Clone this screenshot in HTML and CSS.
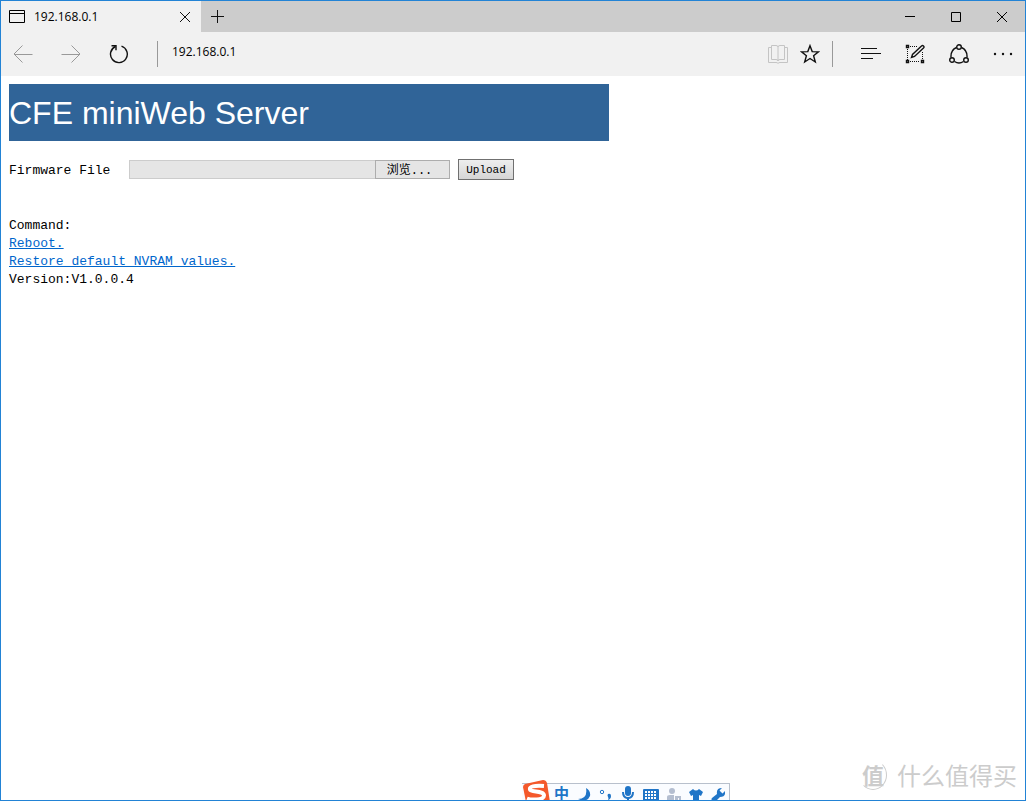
FILE: index.html
```
<!DOCTYPE html>
<html lang="en">
<head>
<meta charset="utf-8">
<title>192.168.0.1</title>
<link rel="stylesheet" href="styles.css">
</head>
<body>
<div class="window">
  <header class="titlebar">
    <div class="tab">
      <svg class="tab-icon" width="16" height="14" viewBox="0 0 16 14"><path d="M.5 .5h15v12H.5zM.5 3.5h15"/></svg>
      <span class="tab-title">192.168.0.1</span>
      <button class="icon-button tab-close" aria-label="Close tab"><svg width="12" height="12" viewBox="0 0 12 12"><path d="M1 1l10 10M11 1L1 11"/></svg></button>
    </div>
    <button class="icon-button new-tab" aria-label="New tab"><svg width="13" height="13" viewBox="0 0 13 13"><path d="M6.5 0v13M0 6.5h13"/></svg></button>
    <div class="window-controls">
      <button class="icon-button control" aria-label="Minimize"><svg width="10" height="10" viewBox="0 0 10 10"><path d="M0 4.5h10"/></svg></button>
      <button class="icon-button control" aria-label="Maximize"><svg width="10" height="10" viewBox="0 0 10 10"><path d="M.5 .5h9v9h-9z"/></svg></button>
      <button class="icon-button control" aria-label="Close"><svg width="10" height="10" viewBox="0 0 10 10"><path d="M0 0l10 10M10 0L0 10"/></svg></button>
    </div>
  </header>
  <nav class="toolbar">
    <div class="history">
      <button class="icon-button dim" aria-label="Back"><svg width="20" height="18" viewBox="0 0 20 18"><path d="M9.5 .5L1 9l8.500 8.500M1 9.500h18.500"/></svg></button>
      <button class="icon-button dim" aria-label="Forward"><svg width="20" height="18" viewBox="0 0 20 18"><path d="M10.500 .5L19 9l-8.500 8.500M19 9.500H.5"/></svg></button>
      <button class="icon-button refresh" aria-label="Refresh"><svg width="20" height="20" viewBox="0 0 20 20"><path d="M12.500 2.200A8.400 8.400 0 1 1 6.500 2.500"/><path d="M2.500 1.700h4.500v4.500"/></svg></button>
    </div>
    <input class="address" type="text" value="192.168.0.1" aria-label="Address">
    <div class="page-tools">
      <button class="icon-button pale" aria-label="Reading view"><svg width="20" height="20" viewBox="0 0 20 20"><path d="M3.500 1.500H8q2 0 2 1.500 0-1.500 2-1.500h4.500v14H12q-2 0-2 1.500 0-1.500-2-1.500H3.500zM10 3v14M3.500 3.500h-3v15H8q2 0 2 1 0-1 2-1h7.500v-15h-3"/></svg></button>
      <button class="icon-button star" aria-label="Favorites"><svg width="20" height="20" viewBox="0 0 20 20"><path d="M10 1.700l2.200 5.900 6.300.3-4.900 3.900 1.700 6.200-5.300-3.500L4.700 18l1.700-6.200-4.900-3.900 6.300-.3z"/></svg></button>
    </div>
    <div class="menu-tools">
      <button class="icon-button lines" aria-label="Hub"><svg width="20" height="14" viewBox="0 0 20 14"><path d="M0 1.500h16M0 6.500h20M0 11.500h12"/></svg></button>
      <button class="icon-button note" aria-label="Web note"><svg width="20" height="20" viewBox="0 0 20 20"><path stroke-width="1" stroke-dasharray="1 1" d="M5 2.500h8M2.500 5v11M5 17.500h10M17.500 8v8"/><path d="M1.500 1.500h2v2h-2zM1.500 16.500h2v2h-2zM16.500 16.500h2v2h-2zM6.500 13.500l1-3 9-8.500q1-1 2 0t0 2L9.500 12.500z"/></svg></button>
      <button class="icon-button share" aria-label="Share"><svg width="20" height="20" viewBox="0 0 20 20"><path d="M7.500 3.500Q1.500 6 2 13.500M12.500 3.500Q18.500 6 18 13.500M5.500 17.500q4.500 3 9 0"/><circle cx="10" cy="3" r="2.300"/><circle cx="3" cy="16" r="2.300"/><circle cx="17" cy="16" r="2.300"/></svg></button>
      <button class="icon-button" aria-label="More"><svg class="solid" width="20" height="4" viewBox="0 0 20 4"><circle cx="2" cy="2" r="1.200"/><circle cx="10" cy="2" r="1.200"/><circle cx="18" cy="2" r="1.200"/></svg></button>
    </div>
  </nav>
  <main class="page">
    <h1 class="banner">CFE miniWeb Server</h1>
    <form class="upload">
      <label class="file-label" for="firmware">Firmware File</label>
      <input class="file-name" id="firmware" type="text" readonly>
      <button class="browse" type="button">浏览...</button>
      <button class="submit" type="button">Upload</button>
    </form>
    <section class="commands">
      <div>Command:</div>
      <div><a href="#reboot">Reboot.</a></div>
      <div><a href="#restore">Restore default NVRAM values.</a></div>
      <div>Version:V1.0.0.4</div>
    </section>
  </main>
  <div class="watermark">
    <span class="watermark-seal">值</span>
    <span>什么值得买</span>
  </div>
  <div class="ime">
    <svg class="ime-logo" width="28" height="22" viewBox="0 0 28 22"><path fill="#f4592b" d="M3 4L21 0q3 0 4 3l3 19H4L1 7q0-2 2-3z"/><path fill="none" stroke="#fff" stroke-width="4" d="M22 6Q7 5 8 9.500c1 3 14 1 14 6S9 20 5 18.500"/></svg>
    <span class="ime-mode">中</span>
    <svg width="14" height="14" viewBox="0 0 14 14"><path d="M9 0q5 3 4 8-3 7-12 3 10 0 8-11z"/></svg>
    <svg width="14" height="14" viewBox="0 0 14 14"><circle class="ring" cx="3" cy="4" r="1.700"/><path d="M9 6q3-1 3 2 0 3-3 4 1-2 0-3-1-2 0-3z"/></svg>
    <svg width="14" height="16" viewBox="0 0 14 16"><rect x="4" y="0" width="6" height="10" rx="3"/><path d="M1 6h2q0 5 4 5t4-5h2q0 6-5 7v2h3v1H3v-1h3v-2Q1 12 1 6z"/></svg>
    <svg width="16" height="14" viewBox="0 0 16 14"><rect y="1" width="16" height="12" rx="1"/><path class="keys" d="M2 4h12M2 7h12M2 10h12"/></svg>
    <svg class="muted" width="14" height="14" viewBox="0 0 14 14"><circle cx="5" cy="3" r="3"/><path d="M0 14V9q0-2 3-2h4v7zM8 8h6v6h-2v-4h-1v4H8z"/></svg>
    <svg width="14" height="14" viewBox="0 0 14 14"><path d="M4 1q3 3 6 0l4 3-2 4-2-1v7H4V7L2 8 0 4z"/></svg>
    <svg width="14" height="14" viewBox="0 0 14 14"><path d="M11 0L8.500 2.500l3 3L14 3q1 6-5 6l-5 5q-2 1-3-1t0-3l5-4q-1-6 5-6z"/></svg>
  </div>
</div>
</body>
</html>
```
FILE: styles.css
```
* { box-sizing: border-box; }

body {
  margin: 0;
  background: #fff;
  color: #000;
  font-family: "Liberation Mono", "Noto Sans CJK SC", monospace;
  font-size: 13px;
}

.window {
  position: relative;
  display: flex;
  flex-direction: column;
  min-height: 100vh;
  border: 1px solid #2283d5;
  overflow: hidden;
}

svg { display: block; flex: none; }

.icon-button {
  display: flex;
  align-items: center;
  justify-content: center;
  padding: 0;
  border: 0;
  background: none;
}

.icon-button svg, .tab-icon {
  fill: none;
  stroke: #111;
}

.tab-icon, .control svg { stroke: #000; }
.icon-button .solid { fill: #111; stroke: none; }
.dim svg { stroke: #999; }
.pale svg { stroke: #c4c4c4; }
.star svg, .note svg, .refresh svg, .share svg { stroke-width: 1.4; }

.titlebar {
  display: flex;
  height: 31px;
  background: #ccc;
}

.tab {
  display: flex;
  align-items: center;
  width: 200px;
  padding: 0 10px 0 8px;
  background: #f1f1f1;
}

.tab-title, .address {
  font-family: "Open Sans", sans-serif;
  font-size: 12px;
}

.tab-title { flex: 1; margin-left: 9px; }
.new-tab { width: 33px; }
.window-controls { display: flex; margin-left: auto; }
.control { width: 46px; }

.toolbar {
  display: flex;
  align-items: center;
  height: 44px;
  padding: 0 12px;
  background: #f1f1f1;
}

.history { display: flex; gap: 28px; }

.address {
  flex: 1;
  height: 26px;
  min-width: 0;
  margin-left: 28px;
  padding: 0 14px 6px;
  border: 0;
  border-left: 1px solid #999;
  background: none;
  color: #000;
}

.page-tools {
  display: flex;
  align-items: center;
  gap: 12px;
  height: 26px;
  padding-right: 12px;
  border-right: 1px solid #999;
}

.menu-tools {
  display: flex;
  gap: 24px;
  margin-left: 28px;
}

.page { flex: 1; padding: 8px; }

.banner {
  max-width: 600px;
  margin: 0;
  padding-top: 1px;
  background: #306498;
  color: #fff;
  font: 32px/56px "Liberation Sans", Arial, sans-serif;
}

.upload {
  display: flex;
  align-items: center;
  height: 22px;
  margin-top: 17px;
}

.file-label { width: 120px; padding-top: 2px; }

.file-name {
  width: 246px;
  height: 19px;
  border: 1px solid #ccc;
  border-right: 0;
  background: #e5e5e5;
}

.browse, .submit {
  color: #000;
  font-family: inherit;
}

.browse {
  width: 75px;
  height: 19px;
  padding: 2px 6px 0 0;
  border: 1px solid #adadad;
  background: #e5e5e5;
  font-size: 12px;
  line-height: 16px;
}

.submit {
  width: 56px;
  height: 21px;
  margin-left: 8px;
  padding: 2px 0 0;
  border: 1px solid #707070;
  background: linear-gradient(#eee, #d5d5d5);
  font-size: 11px;
}

.commands { margin-top: 37px; line-height: 18px; }
.commands a { color: #0066cc; }

.watermark {
  position: absolute;
  right: 8px;
  bottom: 9px;
  display: flex;
  align-items: center;
  gap: 10px;
  color: #ccc;
  font: 24px/32px "Noto Sans CJK SC", sans-serif;
}

.watermark-seal {
  width: 28px;
  height: 30px;
  border: 1px solid #ccc;
  border-color: transparent #ccc #ccc transparent;
  border-radius: 50%;
  font-size: 22px;
  font-weight: 700;
  line-height: 26px;
  text-align: center;
}

.ime {
  position: absolute;
  left: 521px;
  bottom: -1px;
  display: flex;
  align-items: center;
  gap: 8px;
  height: 18px;
  padding-right: 4px;
  border: 1px solid #b8c0cc;
  border-width: 1px 1px 0 0;
  background: #fafcff;
}

.ime svg { fill: #2075c7; align-self: flex-end; margin-bottom: -1px; }
.ime .ime-logo { margin-right: -4px; }
.ime .muted { fill: #b4bed0; }
.ime .ring { fill: none; stroke: #2075c7; }
.ime .keys { stroke: #fff; stroke-width: 2; stroke-dasharray: 2 1; }

.ime-mode {
  color: #2075c7;
  font: 700 15px/18px "Noto Sans CJK SC", sans-serif;
}
```
